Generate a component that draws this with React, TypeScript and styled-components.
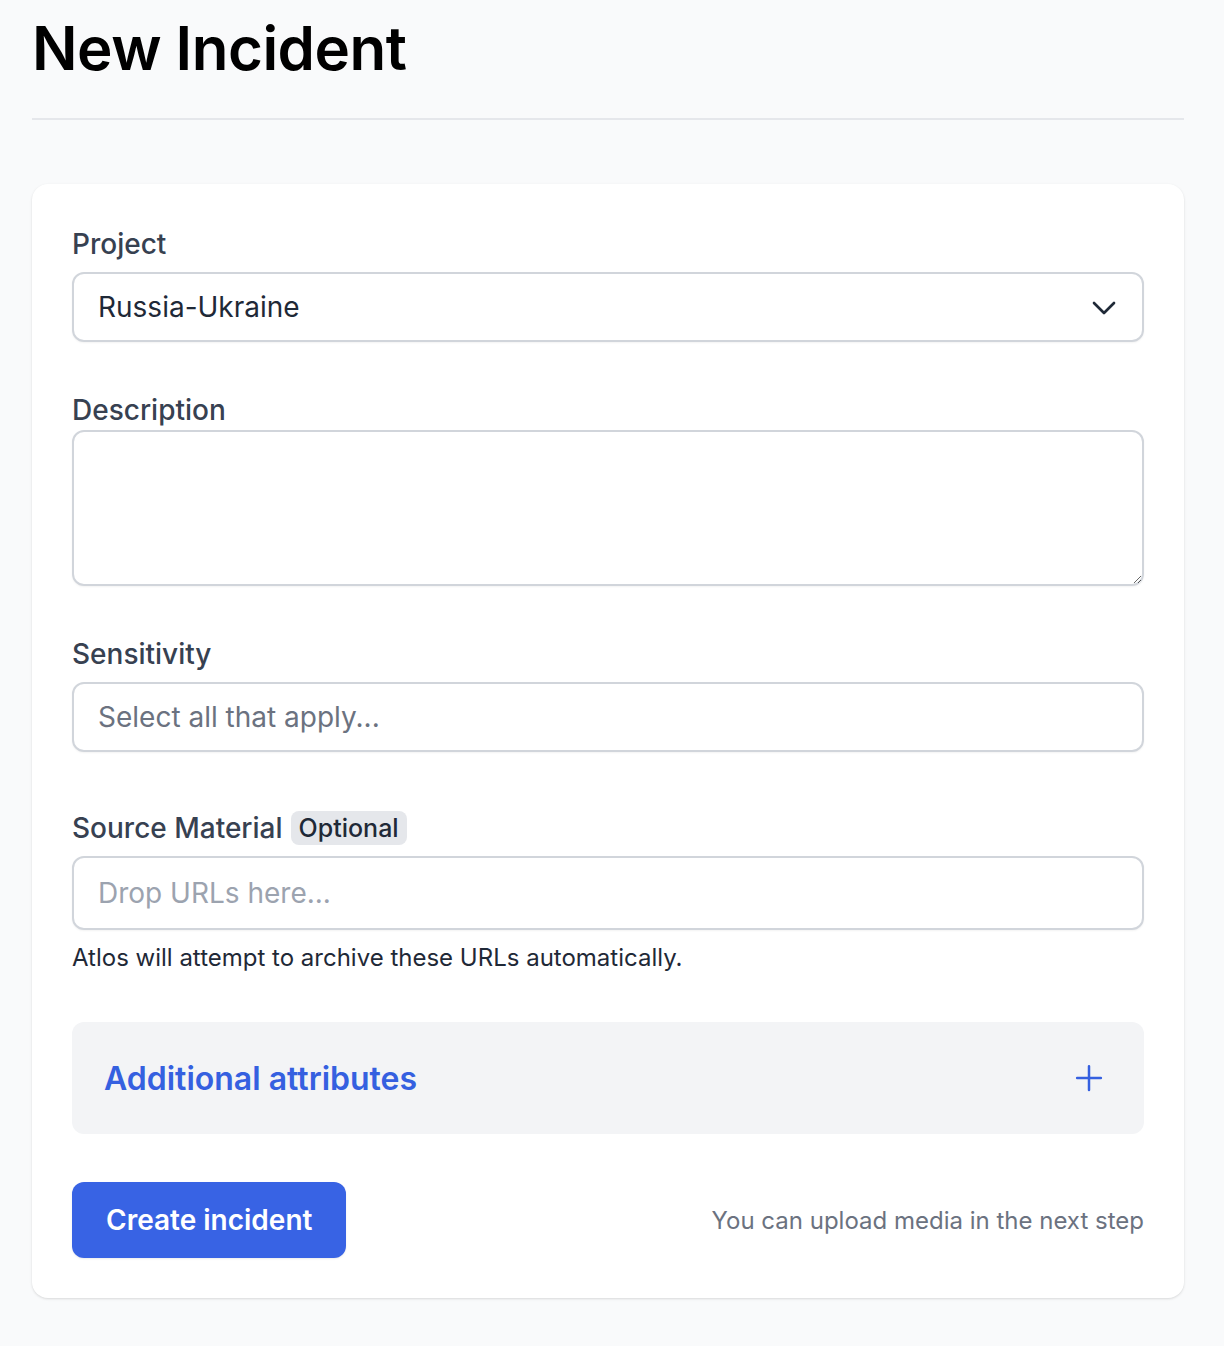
import styled, { createGlobalStyle } from "styled-components";

const GlobalStyle = createGlobalStyle`
 * { box-sizing: border-box; }
 body {
  margin: 0;
  background: #f9fafb;
  font-family: Inter, "Noto Sans", sans-serif;
  -webkit-font-smoothing: antialiased;
 }
`;

const Page = styled.main`
 padding: 0 40px 48px 32px;
 width: 1224px;
`;

const Header = styled.header`
 padding-top: 12px;
 padding-bottom: 34px;
 border-bottom: 2px solid #e5e7eb;
 margin-bottom: 64px;
`;

const Title = styled.h1`
 margin: 0;
 font-size: 60px;
 line-height: 72px;
 font-weight: 600;
 color: #000;
 letter-spacing: -0.5px;
`;

const Card = styled.section`
 background: #fff;
 border-radius: 16px;
 box-shadow: 0 1px 3px rgba(0, 0, 0, 0.1), 0 1px 2px rgba(0, 0, 0, 0.04);
 padding: 40px;
 display: flex;
 flex-direction: column;
`;

const Field = styled.div<{ $gap?: number; $bottom?: number }>`
 display: flex;
 flex-direction: column;
 gap: ${({ $gap }) => $gap ?? 8}px;
 margin-bottom: ${({ $bottom }) => $bottom ?? 48}px;
`;

const Label = styled.label`
 display: flex;
 align-items: center;
 gap: 8px;
 font-size: 28px;
 line-height: 40px;
 font-weight: 500;
 color: #374151;
`;

const Badge = styled.span`
 display: inline-block;
 background: #e5e7eb;
 color: #1f2937;
 font-size: 25px;
 line-height: 34px;
 font-weight: 500;
 padding: 0 8px;
 border-radius: 8px;
`;

const Box = styled.div<{ $height?: number }>`
 display: flex;
 align-items: center;
 justify-content: space-between;
 height: ${({ $height }) => $height ?? 70}px;
 padding: 0 22px 0 24px;
 border: 2px solid #d1d5db;
 border-radius: 12px;
 background: #fff;
 box-shadow: 0 1px 2px rgba(0, 0, 0, 0.05);
 font-size: 28px;
 color: #1f2937;
`;

const Placeholder = styled.span<{ $light?: boolean }>`
 color: ${({ $light }) => ($light ? "#9ca3af" : "#6b7280")};
`;

const TextArea = styled.textarea`
 display: block;
 width: 100%;
 height: 156px;
 border: 2px solid #d1d5db;
 border-radius: 12px;
 box-shadow: 0 1px 2px rgba(0, 0, 0, 0.05);
 font: inherit;
 font-size: 28px;
 padding: 16px 24px;
 resize: vertical;
 outline: none;
`;

const Help = styled.p`
 margin: 4px 0 0;
 font-size: 24px;
 line-height: 32px;
 color: #1f2937;
`;

const Accordion = styled.div`
 display: flex;
 align-items: center;
 justify-content: space-between;
 height: 112px;
 padding: 0 40px 0 32px;
 background: #f3f4f6;
 border-radius: 12px;
 margin-bottom: 48px;
`;

const AccordionTitle = styled.span`
 font-size: 32px;
 font-weight: 600;
 color: #3560e0;
`;

const Footer = styled.div`
 display: flex;
 align-items: center;
 justify-content: space-between;
`;

const Button = styled.button`
 height: 76px;
 padding: 0 34px;
 border: none;
 border-radius: 12px;
 background: #3863e4;
 color: #fff;
 font: inherit;
 font-size: 28px;
 font-weight: 600;
 box-shadow: 0 1px 2px rgba(0, 0, 0, 0.08);
`;

const Note = styled.span`
 font-size: 24px;
 color: #6b7280;
`;

const Chevron = () => (
 <svg width="32" height="32" viewBox="0 0 24 24" fill="none" stroke="#1f2937" strokeWidth="2" strokeLinecap="round" strokeLinejoin="round">
  <path d="M4.5 9l7.5 7.5 7.5-7.5" />
 </svg>
);

const Plus = () => (
 <svg width="30" height="30" viewBox="0 0 24 24" fill="none" stroke="#3560e0" strokeWidth="2" strokeLinecap="round">
  <path d="M12 2.5v19M2.5 12h19" />
 </svg>
);

export default function App() {
 return (
  <>
   <GlobalStyle />
   <Page>
    <Header>
     <Title>New Incident</Title>
    </Header>
    <Card>
     <Field>
      <Label>Project</Label>
      <Box>
       <span>Russia-Ukraine</span>
       <Chevron />
      </Box>
     </Field>
     <Field $gap={0}>
      <Label>Description</Label>
      <TextArea />
     </Field>
     <Field $bottom={56}>
      <Label>Sensitivity</Label>
      <Box>
       <Placeholder>Select all that apply...</Placeholder>
      </Box>
     </Field>
     <Field $bottom={48}>
      <Label>
       Source Material <Badge>Optional</Badge>
      </Label>
      <Box $height={74}>
       <Placeholder $light>Drop URLs here...</Placeholder>
      </Box>
      <Help>Atlos will attempt to archive these URLs automatically.</Help>
     </Field>
     <Accordion>
      <AccordionTitle>Additional attributes</AccordionTitle>
      <Plus />
     </Accordion>
     <Footer>
      <Button>Create incident</Button>
      <Note>You can upload media in the next step</Note>
     </Footer>
    </Card>
   </Page>
  </>
 );
}
